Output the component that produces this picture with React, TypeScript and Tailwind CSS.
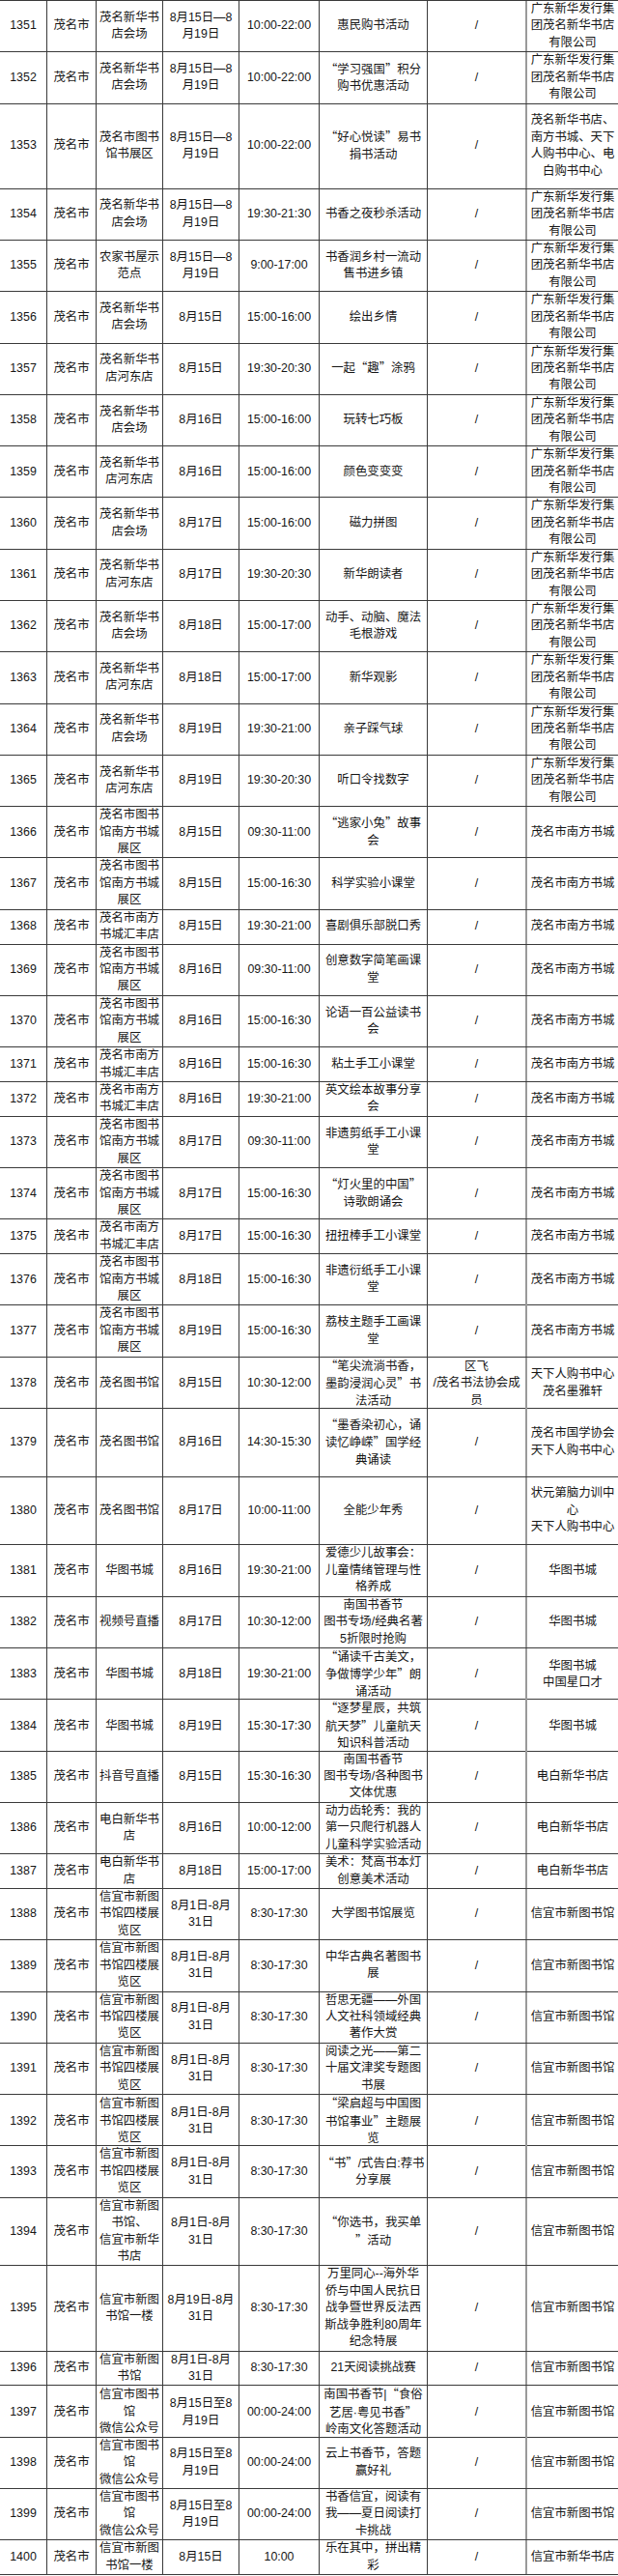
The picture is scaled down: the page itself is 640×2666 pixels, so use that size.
import React from 'react'

// 列宽：序号 / 地市 / 地点 / 日期 / 时间 / 活动 / 嘉宾 / 主办
const COLS = 'grid grid-cols-[49px_51px_69px_79px_83px_112px_103px_94px]'

const XH = '广东新华发行集\n团茂名新华书店\n有限公司'
const NF = '茂名市南方书城'
const XY = '信宜市新图书馆'
const HD_A = '茂名新华书\n店会场'
const HD_B = '茂名新华书\n店河东店'
const TS = '茂名市图书\n馆南方书城\n展区'
const HF = '茂名市南方\n书城汇丰店'
const SL = '信宜市新图\n书馆四楼展\n览区'
const WX = '信宜市图书\n馆\n微信公众号'
const D1519 = '8月15日—8\n月19日'
const AUG = '8月1日-8月\n31日'
const ZHI = '8月15日至8\n月19日'

// [序号, 行数, 地点, 日期, 时间, 活动, 嘉宾, 主办]
const rows: [number, number, string, string, string, string, string, string][] = [
  [1351, 3, HD_A, D1519, '10:00-22:00', '惠民购书活动', '/', XH],
  [1352, 3, HD_A, D1519, '10:00-22:00', '“学习强国”积分\n购书优惠活动', '/', XH],
  [1353, 5, '茂名市图书\n馆书展区', D1519, '10:00-22:00', '“好心悦读”易书\n捐书活动', '/', '茂名新华书店、\n南方书城、天下\n人购书中心、电\n白购书中心'],
  [1354, 3, HD_A, D1519, '19:30-21:30', '书香之夜秒杀活动', '/', XH],
  [1355, 3, '农家书屋示\n范点', D1519, '9:00-17:00', '书香润乡村一流动\n售书进乡镇', '/', XH],
  [1356, 3, HD_A, '8月15日', '15:00-16:00', '绘出乡情', '/', XH],
  [1357, 3, HD_B, '8月15日', '19:30-20:30', '一起“趣”涂鸦', '/', XH],
  [1358, 3, HD_A, '8月16日', '15:00-16:00', '玩转七巧板', '/', XH],
  [1359, 3, HD_B, '8月16日', '15:00-16:00', '颜色变变变', '/', XH],
  [1360, 3, HD_A, '8月17日', '15:00-16:00', '磁力拼图', '/', XH],
  [1361, 3, HD_B, '8月17日', '19:30-20:30', '新华朗读者', '/', XH],
  [1362, 3, HD_A, '8月18日', '15:00-17:00', '动手、动脑、魔法\n毛根游戏', '/', XH],
  [1363, 3, HD_B, '8月18日', '15:00-17:00', '新华观影', '/', XH],
  [1364, 3, HD_A, '8月19日', '19:30-21:00', '亲子踩气球', '/', XH],
  [1365, 3, HD_B, '8月19日', '19:30-20:30', '听口令找数字', '/', XH],
  [1366, 3, TS, '8月15日', '09:30-11:00', '“逃家小兔”故事\n会', '/', NF],
  [1367, 3, TS, '8月15日', '15:00-16:30', '科学实验小课堂', '/', NF],
  [1368, 2, HF, '8月15日', '19:30-21:00', '喜剧俱乐部脱口秀', '/', NF],
  [1369, 3, TS, '8月16日', '09:30-11:00', '创意数字简笔画课\n堂', '/', NF],
  [1370, 3, TS, '8月16日', '15:00-16:30', '论语一百公益读书\n会', '/', NF],
  [1371, 2, HF, '8月16日', '15:00-16:30', '粘土手工小课堂', '/', NF],
  [1372, 2, HF, '8月16日', '19:30-21:00', '英文绘本故事分享\n会', '/', NF],
  [1373, 3, TS, '8月17日', '09:30-11:00', '非遗剪纸手工小课\n堂', '/', NF],
  [1374, 3, TS, '8月17日', '15:00-16:30', '“灯火里的中国”\n诗歌朗诵会', '/', NF],
  [1375, 2, HF, '8月17日', '15:00-16:30', '扭扭棒手工小课堂', '/', NF],
  [1376, 3, TS, '8月18日', '15:00-16:30', '非遗衍纸手工小课\n堂', '/', NF],
  [1377, 3, TS, '8月19日', '15:00-16:30', '荔枝主题手工画课\n堂', '/', NF],
  [1378, 3, '茂名图书馆', '8月15日', '10:30-12:00', '“笔尖流淌书香，\n墨韵浸润心灵”书\n法活动', '区飞\n/茂名书法协会成\n员', '天下人购书中心\n茂名墨雅轩'],
  [1379, 4, '茂名图书馆', '8月16日', '14:30-15:30', '“墨香染初心，诵\n读忆峥嵘”国学经\n典诵读', '/', '茂名市国学协会\n天下人购书中心'],
  [1380, 4, '茂名图书馆', '8月17日', '10:00-11:00', '全能少年秀', '/', '状元第脑力训中\n心\n天下人购书中心'],
  [1381, 3, '华图书城', '8月16日', '19:30-21:00', '爱德少儿故事会：\n儿童情绪管理与性\n格养成', '/', '华图书城'],
  [1382, 3, '视频号直播', '8月17日', '10:30-12:00', '南国书香节\n图书专场/经典名著\n5折限时抢购', '/', '华图书城'],
  [1383, 3, '华图书城', '8月18日', '19:30-21:00', '“诵读千古美文，\n争做博学少年”朗\n诵活动', '/', '华图书城\n中国星口才'],
  [1384, 3, '华图书城', '8月19日', '15:30-17:30', '“逐梦星辰，共筑\n航天梦”儿童航天\n知识科普活动', '/', '华图书城'],
  [1385, 3, '抖音号直播', '8月15日', '15:30-16:30', '南国书香节\n图书专场/各种图书\n文体优惠', '/', '电白新华书店'],
  [1386, 3, '电白新华书\n店', '8月16日', '10:00-12:00', '动力齿轮秀：我的\n第一只爬行机器人\n儿童科学实验活动', '/', '电白新华书店'],
  [1387, 2, '电白新华书\n店', '8月18日', '15:00-17:00', '美术：梵高书本灯\n创意美术活动', '/', '电白新华书店'],
  [1388, 3, SL, AUG, '8:30-17:30', '大学图书馆展览', '/', XY],
  [1389, 3, SL, AUG, '8:30-17:30', '中华古典名著图书\n展', '/', XY],
  [1390, 3, SL, AUG, '8:30-17:30', '哲思无疆——外国\n人文社科领域经典\n著作大赏', '/', XY],
  [1391, 3, SL, AUG, '8:30-17:30', '阅读之光——第二\n十届文津奖专题图\n书展', '/', XY],
  [1392, 3, SL, AUG, '8:30-17:30', '“梁启超与中国图\n书馆事业”主题展\n览', '/', XY],
  [1393, 3, SL, AUG, '8:30-17:30', '“书”/式告白:荐书\n分享展', '/', XY],
  [1394, 4, '信宜市新图\n书馆、\n信宜市新华\n书店', AUG, '8:30-17:30', '“你选书，我买单\n”活动', '/', XY],
  [1395, 5, '信宜市新图\n书馆一楼', '8月19日-8月\n31日', '8:30-17:30', '万里同心--海外华\n侨与中国人民抗日\n战争暨世界反法西\n斯战争胜利80周年\n纪念特展', '/', XY],
  [1396, 2, '信宜市新图\n书馆', AUG, '8:30-17:30', '21天阅读挑战赛', '/', XY],
  [1397, 3, WX, ZHI, '00:00-24:00', '南国书香节|“食俗\n艺居·粤见书香”\n岭南文化答题活动', '/', XY],
  [1398, 3, WX, ZHI, '00:00-24:00', '云上书香节，答题\n赢好礼', '/', XY],
  [1399, 3, WX, ZHI, '00:00-24:00', '书香信宜，阅读有\n我——夏日阅读打\n卡挑战', '/', XY],
  [1400, 2, '信宜市新图\n书馆一楼', '8月15日', '10:00', '乐在其中，拼出精\n彩', '/', '信宜市新华书店'],
]

const HEIGHT: Record<number, string> = {
  2: 'h-[35.86px]',
  3: 'h-[53.29px]',
  4: 'h-[70.72px]',
  5: 'h-[88.15px]',
}

// 中文引号用 CJK 字体，保持全角宽度
function Txt({ s }: { s: string }) {
  return (
    <span>
      {s.split(/([“”])/).map((p, i) =>
        p === '“' || p === '”' ? (
          <span key={i} className="font-['Noto_Sans_CJK_SC']">{p}</span>
        ) : (
          <React.Fragment key={i}>{p}</React.Fragment>
        )
      )}
    </span>
  )
}

function Cell({ s, edge }: { s: string; edge?: 'guest' | 'last' }) {
  const border =
    edge === 'last'
      ? ''
      : edge === 'guest'
        ? 'border-r-2 border-[#9a9a9a]'
        : 'border-r border-[#3a3a3a]'
  return (
    <div className={`flex items-center justify-center text-center whitespace-pre ${border}`}>
      <Txt s={s} />
    </div>
  )
}

export default function App() {
  return (
    <div className="w-[640px] bg-white text-[#161616] text-[12.4px] leading-[17.43px] font-['Liberation_Sans','Noto_Sans_CJK_SC',sans-serif]">
      <div className="border-t border-[#3a3a3a]">
        {rows.map(([no, n, place, date, time, act, guest, org]) => (
          <div key={no} className={`${COLS} ${HEIGHT[n]} border-b border-[#3a3a3a]`}>
            <Cell s={String(no)} />
            <Cell s="茂名市" />
            <Cell s={place} />
            <Cell s={date} />
            <Cell s={time} />
            <Cell s={act} />
            <Cell s={guest} edge="guest" />
            <Cell s={org} edge="last" />
          </div>
        ))}
      </div>
    </div>
  )
}
